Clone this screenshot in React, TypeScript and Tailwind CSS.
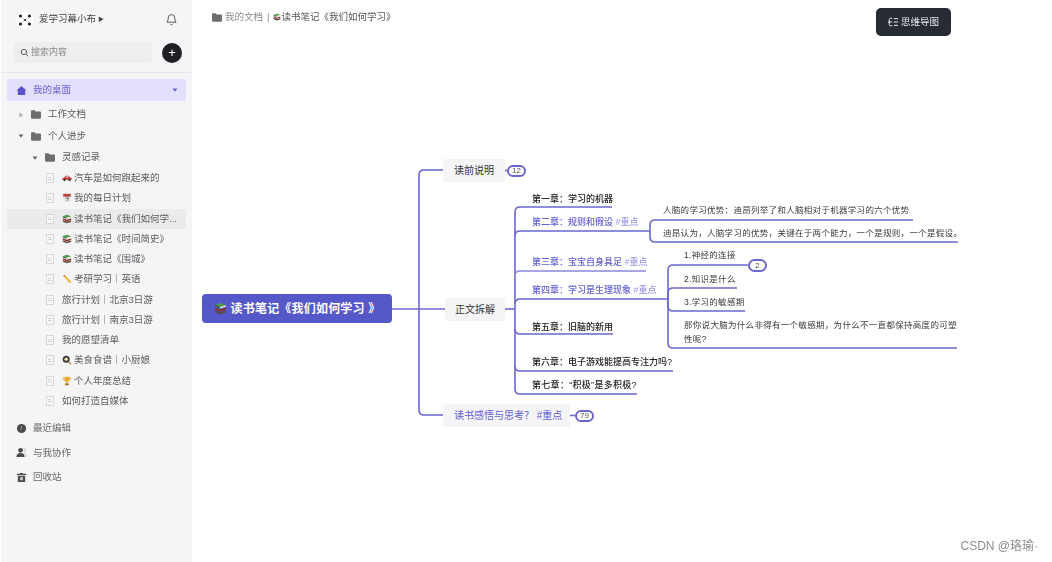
import React from "react";

const Books = ({ className = "w-[10px] h-[10px]" }: { className?: string }) => (
  <svg viewBox="0 0 12 12" className={`${className} shrink-0`}>
    <path d="M1 2.5 6.5 1 11 3 5.5 4.6Z" fill="#4f9a4a" />
    <path d="M1 2.5 5.5 4.6V6L1 4Z" fill="#2f6b3a" />
    <path d="M5.5 4.6 11 3V4.4L5.5 6Z" fill="#e8e4d4" />
    <path d="M1 5 5.500 7 11 5.400V7.200L5.500 9 1 7Z" fill="#8e2f2f" />
    <path d="M1 7.500 5.500 9.400 11 7.800V9.600L5.500 11.200 1 9.300Z" fill="#5a4a3a" />
  </svg>
);

const Car = () => (
  <svg viewBox="0 0 12 12" className="w-[10px] h-[10px] shrink-0">
    <path d="M.5 8V6.4L2.5 5.6 4.2 3.2H8L10 5.4 11.5 6V8Z" fill="#d9352c" />
    <path d="M5 4H7.6L8.8 5.4H4.2Z" fill="#bfe0f0" />
    <circle cx="3" cy="8.4" r="1.4" fill="#333" />
    <circle cx="9" cy="8.4" r="1.4" fill="#333" />
  </svg>
);

const Calendar = () => (
  <svg viewBox="0 0 12 12" className="w-[10px] h-[10px] shrink-0">
    <rect x="1.5" y="1" width="9" height="10" fill="#e8e6e2" />
    <rect x="1.5" y="1" width="9" height="3.4" fill="#b8423c" />
    <path d="M4 6h4L6 9.5" stroke="#555" strokeWidth="1" fill="none" />
  </svg>
);

const Pencil = () => (
  <svg viewBox="0 0 12 12" className="w-[10px] h-[10px] shrink-0">
    <path d="M1.5 2.5 3 1 10.5 8.5 11 11 8.6 10.4Z" fill="#efb93f" />
    <path d="M1.5 2.5 3 1 4 2 2.5 3.5Z" fill="#d9736a" />
  </svg>
);

const Pan = () => (
  <svg viewBox="0 0 12 12" className="w-[10px] h-[10px] shrink-0">
    <circle cx="5" cy="5" r="4.2" fill="#3a3a3a" />
    <circle cx="5" cy="5" r="2" fill="#f4e6b8" />
    <path d="M8 8 11 11" stroke="#c98a3a" strokeWidth="1.6" />
  </svg>
);

const Trophy = () => (
  <svg viewBox="0 0 12 12" className="w-[10px] h-[10px] shrink-0">
    <path d="M3 1H9V4.5C9 6.2 7.6 7 6 7S3 6.2 3 4.5Z" fill="#e6a92c" />
    <path d="M3 2H1.2C1.2 4 2 5 3.4 5.2M9 2H10.8C10.8 4 10 5 8.6 5.2" stroke="#e6a92c" fill="none" />
    <path d="M5.4 7H6.6V9H8.4V11H3.6V9H5.4Z" fill="#a97c2a" />
  </svg>
);

const Folder = () => (
  <svg viewBox="0 0 12 10" className="w-[10px] h-[9px] shrink-0">
    <path d="M0 1C0 .5.4 0 1 0H4.4L5.6 1.5H11C11.6 1.5 12 2 12 2.5V9C12 9.6 11.6 10 11 10H1C.4 10 0 9.6 0 9Z" fill="#6e6e70" />
  </svg>
);

const Doc = () => (
  <span className="flex flex-col justify-center gap-[1px] w-[8px] h-[10px] shrink-0 border border-[#d8d8da] bg-[#f7f7f8] px-[1px]">
    <span className="h-px w-[3px] bg-[#d4d4d6]" />
    <span className="h-px w-[4px] bg-[#d4d4d6]" />
  </span>
);

const Caret = ({ open }: { open: boolean }) => (
  <svg viewBox="0 0 6 6" className="w-[6px] h-[6px] shrink-0">
    <path d={open ? "M.5 1.5H5.5L3 4.8Z" : "M1.5 .5V5.5L4.8 3Z"} fill={open ? "#666" : "#aaa"} />
  </svg>
);

const leaves: { icon?: React.ReactNode; text: string; active?: boolean }[] = [
  { icon: <Car />, text: "汽车是如何跑起来的" },
  { icon: <Calendar />, text: "我的每日计划" },
  { icon: <Books />, text: "读书笔记《我们如何学...", active: true },
  { icon: <Books />, text: "读书笔记《时间简史》" },
  { icon: <Books />, text: "读书笔记《围城》" },
  { icon: <Pencil />, text: "考研学习｜英语" },
  { text: "旅行计划｜北京3日游" },
  { text: "旅行计划｜南京3日游" },
  { text: "我的愿望清单" },
  { icon: <Pan />, text: "美食食谱｜小厨娘" },
  { icon: <Trophy />, text: "个人年度总结" },
  { text: "如何打造自媒体" },
];

function Sidebar() {
  return (
    <aside className="w-[191px] ml-px h-full shrink-0 bg-[#f4f5f7] flex flex-col text-[9.5px] text-[#5c5c5e] blur-[0.4px]">
      <div className="h-[38px] flex items-center pl-[15px] pr-[14px] pt-[1px]">
        <svg viewBox="0 0 18 18" className="w-[18px] h-[18px] shrink-0">
          <circle cx="9" cy="9" r="9" fill="#fff" />
          <path d="M4.5 5 9 9 13.5 5M4.5 13 9 9 13.5 13" stroke="#777" strokeWidth=".4" fill="none" />
          <circle cx="4.5" cy="5" r="1.6" fill="#222" />
          <circle cx="13.5" cy="5" r="1.6" fill="#222" />
          <circle cx="9" cy="9" r="1.1" fill="#222" />
          <circle cx="4.5" cy="13" r="1.6" fill="#222" />
          <circle cx="13.5" cy="13" r="1.6" fill="#222" />
        </svg>
        <span className="ml-[5px] text-[#444]">爱学习幕小布</span>
        <span className="ml-[2px] text-[6px] text-[#444]">▶</span>
        <svg viewBox="0 0 24 24" className="ml-auto w-[13px] h-[13px]" fill="none" stroke="#555" strokeWidth="1.8">
          <path d="M6 9a6 6 0 0 1 12 0c0 6 2.5 8 2.5 8h-17S6 15 6 9ZM10 20.5a2.2 2.2 0 0 0 4 0" />
        </svg>
      </div>
      <div className="flex items-center pl-[13px] pr-[10px] pt-[4px]">
        <div className="w-[138px] h-[21px] rounded-[3px] bg-[#eeeeee] flex items-center pl-[6px] text-[#8a8a8c] text-[9px]">
          <svg viewBox="0 0 24 24" className="w-[9px] h-[9px] mr-[2px]" fill="none" stroke="#555" strokeWidth="2.6">
            <circle cx="10.5" cy="10.5" r="7" />
            <path d="m16 16 6 6" />
          </svg>
          搜索内容
        </div>
        <div className="ml-auto w-[20px] h-[20px] rounded-full bg-[#1f2024] flex items-center justify-center text-white text-[13px] leading-none">
          +
        </div>
      </div>
      <div className="h-px bg-[#e8e8ea] mt-[9px]" />
      <div className="px-[6px] pt-[6px] flex-1 flex flex-col">
        <div className="h-[22px] rounded-[3px] bg-[#e2e0fa] flex items-center pl-[9px] pr-[8px] text-[#6a63d6]">
          <svg viewBox="0 0 12 12" className="w-[11px] h-[11px] shrink-0">
            <path d="M6 1 .5 6H2V11H10V6H11.5Z" fill="#5a52cf" />
          </svg>
          <span className="ml-[6px]">我的桌面</span>
          <span className="ml-auto">
            <svg viewBox="0 0 6 6" className="w-[6px] h-[6px]">
              <path d="M.5 1.5H5.5L3 4.8Z" fill="#6a63d6" />
            </svg>
          </span>
        </div>
        <div className="h-[21px] mt-[3px] flex items-center pl-[11px]">
          <Caret open={false} />
          <span className="ml-[7px]"><Folder /></span>
          <span className="ml-[7px]">工作文档</span>
        </div>
        <div className="h-[22px] flex items-center pl-[11px]">
          <Caret open />
          <span className="ml-[7px]"><Folder /></span>
          <span className="ml-[7px]">个人进步</span>
        </div>
        <div className="h-[21px] flex items-center pl-[25px]">
          <Caret open />
          <span className="ml-[7px]"><Folder /></span>
          <span className="ml-[7px]">灵感记录</span>
        </div>
        {leaves.map((leaf) => (
          <div
            key={leaf.text}
            className={`h-[20.25px] flex items-center pl-[39px] rounded-[3px] ${leaf.active ? "bg-[#ebebee]" : ""}`}
          >
            <Doc />
            <span className="ml-[8px] flex items-center gap-[2px] whitespace-nowrap">
              {leaf.icon}
              {leaf.text}
            </span>
          </div>
        ))}
        <div className="mt-[5px] flex flex-col text-[#6a6a6c]">
          <div className="h-[24.5px] flex items-center pl-[9px] gap-[6px]">
            <svg viewBox="0 0 12 12" className="w-[11px] h-[11px]">
              <circle cx="6" cy="6" r="5" fill="#4b4b4d" />
              <path d="M6 3.5V6L4.5 7.5" stroke="#aaa" fill="none" />
            </svg>
            最近编辑
          </div>
          <div className="h-[24.5px] flex items-center pl-[9px] gap-[6px]">
            <svg viewBox="0 0 12 12" className="w-[11px] h-[11px]">
              <circle cx="5" cy="3.6" r="2.6" fill="#4b4b4d" />
              <path d="M.5 11C.5 8 2 6.5 5 6.5S9.5 8 9.5 11Z" fill="#4b4b4d" />
              <path d="M9 1.5C10.5 2.5 10.5 5 9 6M10 7C11 8 11.5 9 11.5 10.5" stroke="#999" strokeWidth=".7" fill="none" />
            </svg>
            与我协作
          </div>
          <div className="h-[24.5px] flex items-center pl-[9px] gap-[6px]">
            <svg viewBox="0 0 12 12" className="w-[11px] h-[11px]">
              <path d="M4.5 1H7.5V2H11V3.2H1V2H4.5ZM2 4H10V11H2Z" fill="#4b4b4d" />
              <rect x="4.5" y="5.5" width="3" height="3.5" fill="#c9c9cb" />
            </svg>
            回收站
          </div>
        </div>
      </div>
    </aside>
  );
}

function MindMap() {
  return (
    <div className="absolute inset-0 blur-[0.4px]">
      {/* page coordinates, shifted by the sidebar width */}
      <svg viewBox="192 0 860 562" className="absolute inset-0 w-full h-full" fill="none" stroke="#6a68cf" strokeWidth="1.6">
        <path d="M392 309H445" />
        <path d="M443 170H424Q419 170 419 175V410Q419 415 424 415H443" />
        <path d="M505 170.5H507M570 415.500H575" />
        <path d="M505 309H515" />
        <path d="M612 207H520Q515 207 515 212V389Q515 394 520 394H637" />
        <path d="M515 236Q515 231 520 231H650" />
        <path d="M515 276Q515 271 520 271H646" stroke="#8b89dc" />
        <path d="M515 304Q515 299 520 299H668" />
        <path d="M515 329Q515 334 520 334H613" />
        <path d="M515 366Q515 371 520 371H673" />
        <path d="M913 220H655Q650 220 650 225V237Q650 242 655 242H958" />
        <path d="M748 265H673Q668 265 668 270V343Q668 348 673 348H957" />
        <path d="M737 288H673Q668 288 668 293V306Q668 311 673 311H745" />
      </svg>

      <div className="absolute left-[10px] top-[294px] w-[190px] h-[29px] rounded-[4px] bg-[#5558c9] text-white text-[12px] tracking-[0.2px] font-semibold flex items-center justify-center gap-[4px]">
        <Books className="w-[13px] h-[13px]" />
        读书笔记《我们如何学习 》
      </div>

      <div className="absolute left-[251px] top-[159px] w-[62px] h-[23px] rounded-[2px] bg-[#f5f5f7] text-[#333] text-[10px] flex items-center justify-center">
        读前说明
      </div>
      <div className="absolute left-[253px] top-[298px] w-[60px] h-[23px] rounded-[2px] bg-[#f5f5f7] text-[#333] text-[10px] flex items-center justify-center">
        正文拆解
      </div>
      <div className="absolute left-[251px] top-[404px] w-[127px] h-[23px] rounded-[2px] bg-[#f5f5f7] text-[#6462cf] text-[10px] flex items-center pl-[11px] whitespace-nowrap">
        读书感悟与思考？ #重点
      </div>

      <div className="absolute left-[315px] top-[165px] w-[19px] h-[12px] rounded-full border-2 border-[#6a68cf] bg-white text-[8px] text-[#555] flex items-center justify-center">
        12
      </div>
      <div className="absolute left-[383px] top-[410px] w-[19px] h-[12px] rounded-full border-2 border-[#6a68cf] bg-white text-[8px] text-[#555] flex items-center justify-center">
        79
      </div>
      <div className="absolute left-[556px] top-[259px] w-[19px] h-[13px] rounded-full border-2 border-[#6a68cf] bg-white text-[8px] text-[#555] flex items-center justify-center">
        2
      </div>

      <div className="absolute left-[340px] top-[192px] h-[14px] leading-[14px] text-[9px] font-medium text-[#222] whitespace-nowrap">第一章：学习的机器</div>
      <div className="absolute left-[340px] top-[215px] h-[14px] leading-[14px] text-[9px] font-medium text-[#6462cf] whitespace-nowrap">第二章：规则和假设 <span className="text-[#9a98e0]">#重点</span></div>
      <div className="absolute left-[340px] top-[255px] h-[14px] leading-[14px] text-[9px] font-medium text-[#6462cf] whitespace-nowrap">第三章：宝宝自身具足 <span className="text-[#9a98e0]">#重点</span></div>
      <div className="absolute left-[340px] top-[283px] h-[14px] leading-[14px] text-[9px] font-medium text-[#6462cf] whitespace-nowrap">第四章：学习是生理现象 <span className="text-[#9a98e0]">#重点</span></div>
      <div className="absolute left-[340px] top-[320px] h-[14px] leading-[14px] text-[9px] font-medium text-[#222] whitespace-nowrap">第五章：旧脑的新用</div>
      <div className="absolute left-[340px] top-[355px] h-[14px] leading-[14px] text-[9px] font-medium text-[#222] whitespace-nowrap">第六章：电子游戏能提高专注力吗?</div>
      <div className="absolute left-[340px] top-[378px] h-[14px] leading-[14px] text-[9px] tracking-[0.3px] font-medium text-[#222] whitespace-nowrap">第七章：“积极”是多积极?</div>

      <div className="absolute left-[471px] top-[203px] h-[14px] leading-[14px] text-[8.5px] tracking-[0.3px] text-[#3a3a3a] whitespace-nowrap">人脑的学习优势：迪昂列举了和人脑相对于机器学习的六个优势</div>
      <div className="absolute left-[471px] top-[226px] h-[14px] leading-[14px] text-[8.5px] tracking-[0.3px] text-[#3a3a3a] whitespace-nowrap">迪昂认为，人脑学习的优势，关键在于两个能力，一个是规则，一个是假设。</div>
      <div className="absolute left-[492px] top-[248px] h-[14px] leading-[14px] text-[8.5px] tracking-[0.3px] text-[#3a3a3a] whitespace-nowrap">1.神经的连接</div>
      <div className="absolute left-[492px] top-[272px] h-[14px] leading-[14px] text-[8.5px] tracking-[0.3px] text-[#3a3a3a] whitespace-nowrap">2.知识是什么</div>
      <div className="absolute left-[492px] top-[295px] h-[14px] leading-[14px] text-[8.5px] tracking-[0.3px] text-[#3a3a3a] whitespace-nowrap">3.学习的敏感期</div>
      <div className="absolute left-[492px] top-[318px] w-[276px] leading-[14px] text-[8.5px] tracking-[0.3px] text-[#3a3a3a]">那你说大脑为什么非得有一个敏感期，为什么不一直都保持高度的可塑性呢?</div>
    </div>
  );
}

export default function App() {
  return (
    <div className="w-[1052px] h-[562px] bg-white flex overflow-hidden font-['Liberation_Sans','Noto_Sans_CJK_SC',sans-serif]">
      <Sidebar />
      <main className="relative flex-1">
        <MindMap />
        <div className="relative flex items-start justify-between pl-[20px] pr-[101px] pt-[8px] blur-[0.4px]">
          <div className="flex items-center h-[18px] text-[9.5px] text-[#8a8a8c] whitespace-nowrap">
            <Folder />
            <span className="ml-[3px]">我的文档</span>
            <span className="mx-[4px]">|</span>
            <Books className="w-[8px] h-[8px]" />
            <span className="text-[#555]">读书笔记《我们如何学习》</span>
          </div>
          <div className="w-[75px] h-[28px] rounded-[5px] bg-[#272b34] text-[#e8e8ea] text-[9.5px] flex items-center justify-center gap-[3px]">
            <svg viewBox="0 0 12 12" className="w-[10px] h-[10px]" fill="none" stroke="#e8e8ea" strokeWidth="1.2">
              <path d="M5 1.500H3Q1.500 1.500 1.500 3V9Q1.500 10.500 3 10.500H5M0 6H5M7 2H12M7 6H12M7 10H12" />
            </svg>
            思维导图
          </div>
        </div>
        <div className="absolute right-[14px] bottom-[8px] text-[12px] leading-[16px] text-[#8c8c8c]">CSDN @珞瑜·</div>
      </main>
    </div>
  );
}
